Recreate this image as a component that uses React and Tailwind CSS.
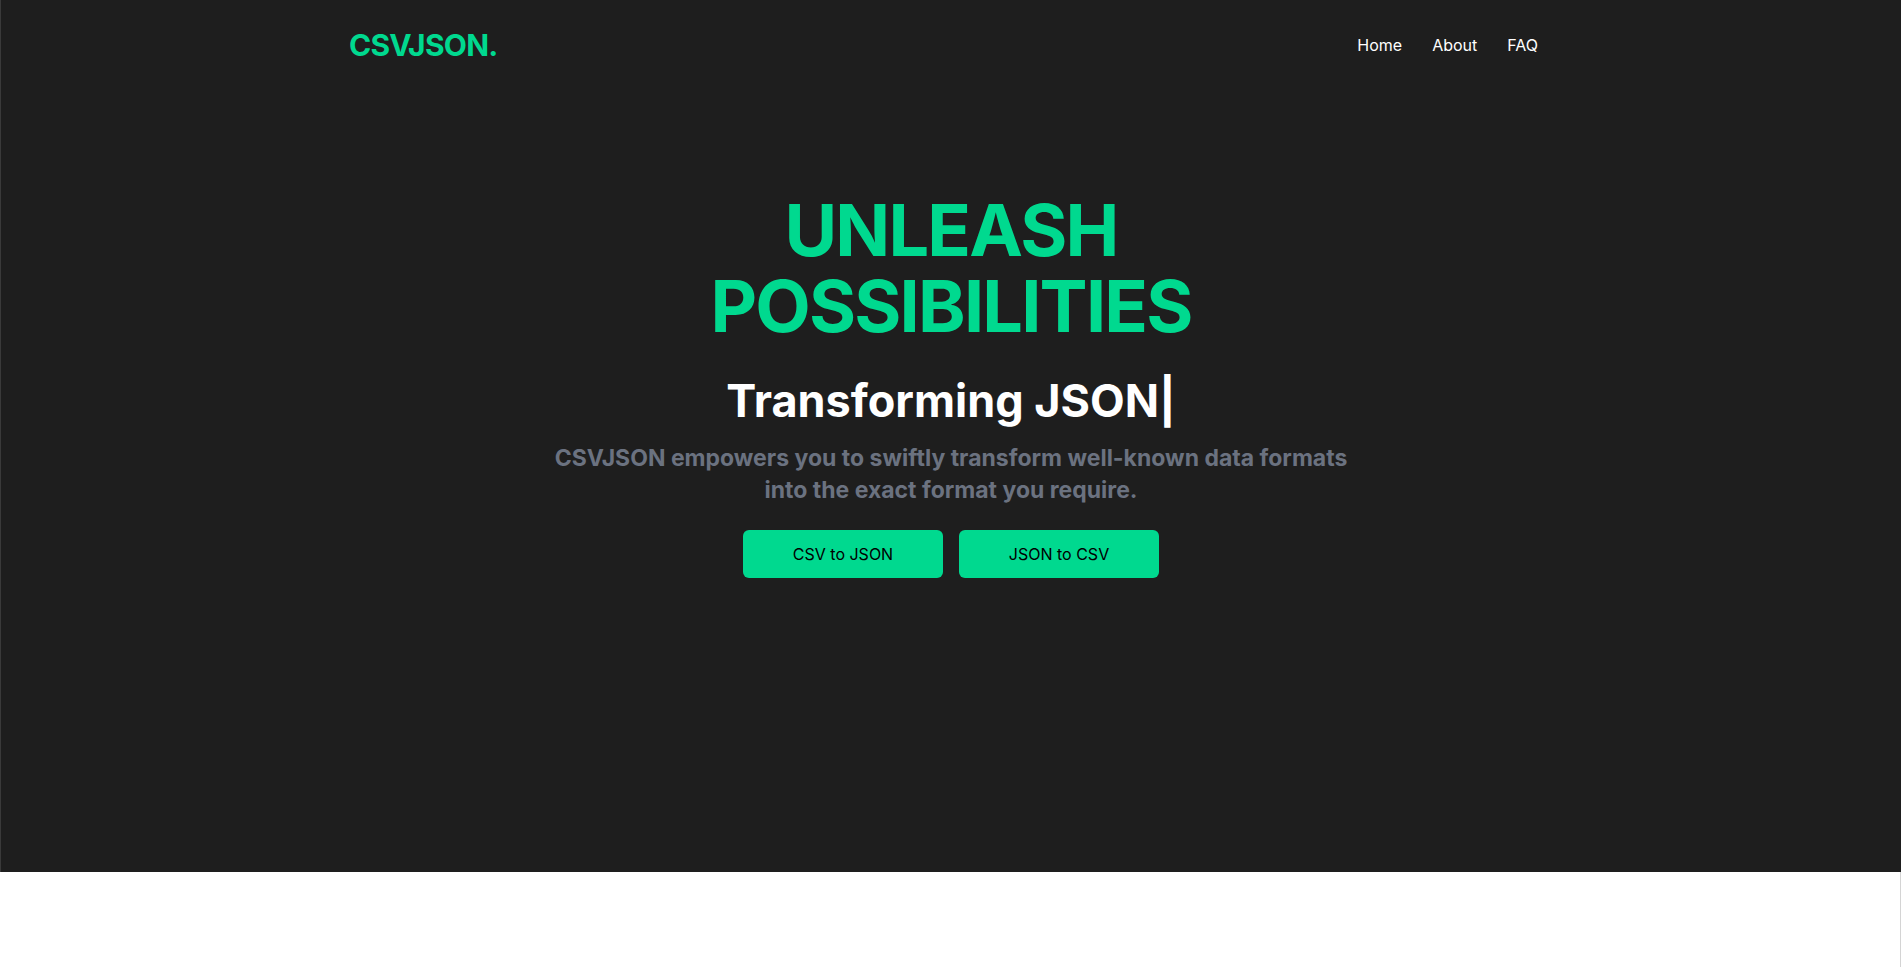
const links = ['Home', 'About', 'FAQ'];

const App = () => {
  return (
    <div className="min-h-screen bg-white font-['Inter',sans-serif]">
      <section className="h-[872px] bg-[#1e1e1e] border-l border-[#3a3a3a]">
        <nav className="mx-auto flex h-[90px] w-[1204px] items-center justify-between">
          <a href="#" className="text-3xl font-bold tracking-tight text-[#00d98f]">CSVJSON.</a>
          <ul className="flex items-center">
            {links.map(l => (
              <li key={l}><a href="#" className="px-[15px] text-base font-normal text-white">{l}</a></li>
            ))}
          </ul>
        </nav>

        <div className="flex flex-col items-center pt-[102px] text-center">
          <h1 className="text-[72px] font-bold leading-[76px] tracking-tight text-[#00d98f]">
            <span className="block">UNLEASH</span>
            <span className="block">POSSIBILITIES</span>
          </h1>
          <h2 className="mt-8 text-[45px] font-bold leading-[50px] text-white">Transforming JSON|</h2>
          <p className="mt-4 max-w-[820px] text-[23px] font-bold leading-[32px] text-[#6b7280]">
            CSVJSON empowers you to swiftly transform well-known data formats into the exact format you require.
          </p>
          <div className="mt-6 flex gap-4">
            <button className="h-12 w-[200px] rounded-md bg-[#00d98f] text-base font-normal text-black">CSV to JSON</button>
            <button className="h-12 w-[200px] rounded-md bg-[#00d98f] text-base font-normal text-black">JSON to CSV</button>
          </div>
        </div>
      </section>
      <div className="h-[95px] border-r border-[#d4d4d4]" />
    </div>
  );
};

export default App;
